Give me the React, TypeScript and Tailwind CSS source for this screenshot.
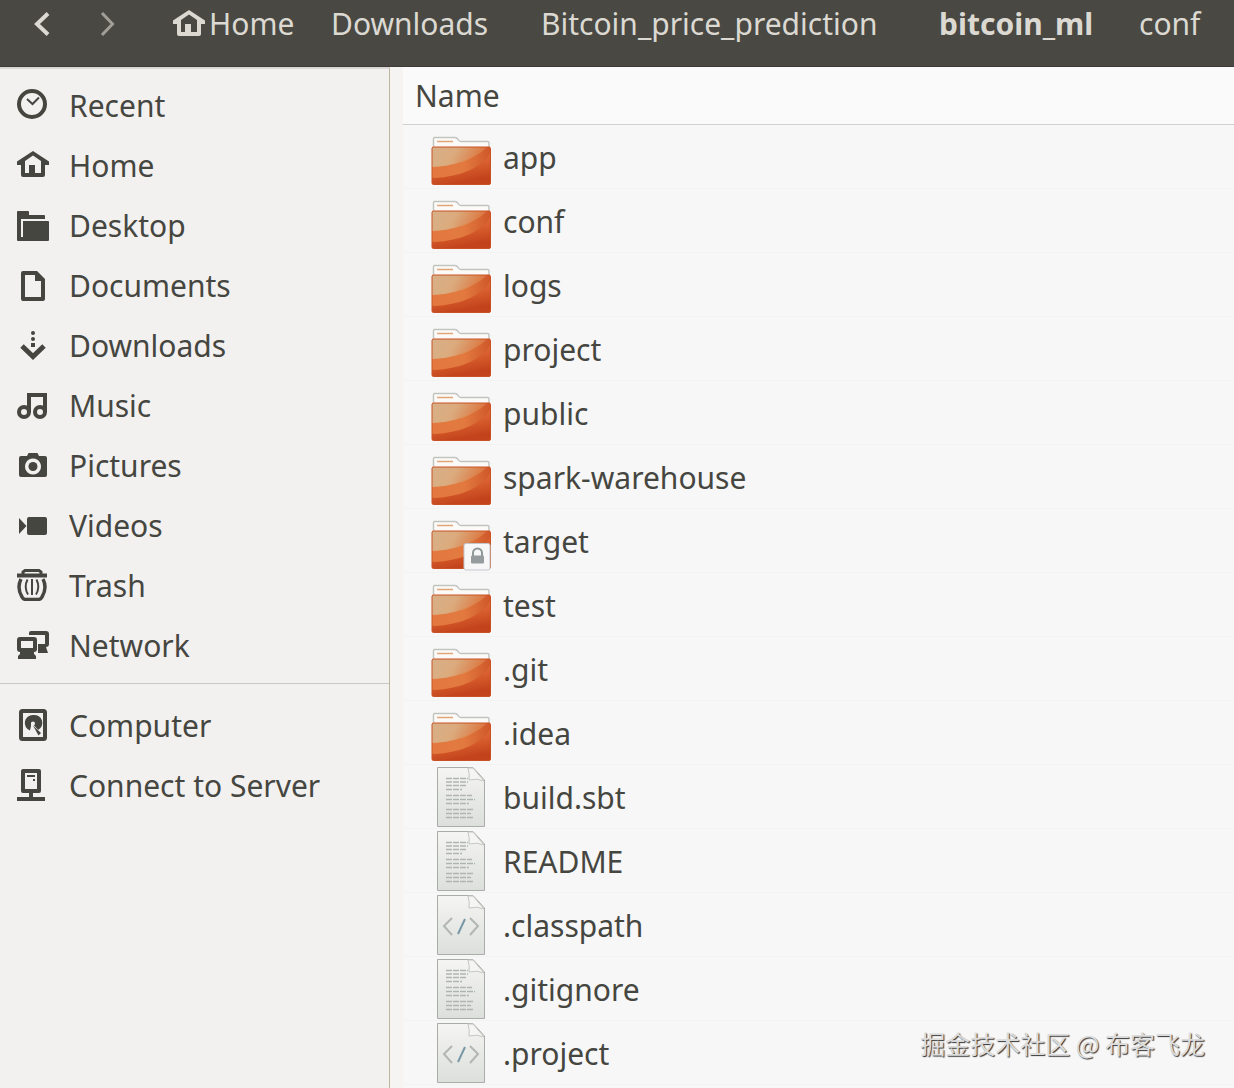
import { ReactNode } from "react";
import { clsx } from "clsx";

type IconName =
  | "recent"
  | "home"
  | "desktop"
  | "documents"
  | "downloads"
  | "music"
  | "pictures"
  | "videos"
  | "trash"
  | "network"
  | "computer"
  | "server";

type EntryKind = "folder" | "locked" | "text" | "code";

interface Place {
  name: string;
  icon: IconName;
}

interface Entry {
  name: string;
  kind: EntryKind;
}

const places: Place[] = [
  { name: "Recent", icon: "recent" },
  { name: "Home", icon: "home" },
  { name: "Desktop", icon: "desktop" },
  { name: "Documents", icon: "documents" },
  { name: "Downloads", icon: "downloads" },
  { name: "Music", icon: "music" },
  { name: "Pictures", icon: "pictures" },
  { name: "Videos", icon: "videos" },
  { name: "Trash", icon: "trash" },
  { name: "Network", icon: "network" },
];

const devices: Place[] = [
  { name: "Computer", icon: "computer" },
  { name: "Connect to Server", icon: "server" },
];

const entries: Entry[] = [
  { name: "app", kind: "folder" },
  { name: "conf", kind: "folder" },
  { name: "logs", kind: "folder" },
  { name: "project", kind: "folder" },
  { name: "public", kind: "folder" },
  { name: "spark-warehouse", kind: "folder" },
  { name: "target", kind: "locked" },
  { name: "test", kind: "folder" },
  { name: ".git", kind: "folder" },
  { name: ".idea", kind: "folder" },
  { name: "build.sbt", kind: "text" },
  { name: "README", kind: "text" },
  { name: ".classpath", kind: "code" },
  { name: ".gitignore", kind: "text" },
  { name: ".project", kind: "code" },
];

const glyphs: Record<IconName, ReactNode> = {
  recent: (
    <g fill="none" stroke="currentColor">
      <circle cx="15" cy="15" r="13" strokeWidth="4" />
      <path d="M10 10l5.5 5L22 8.500" strokeWidth="2" />
    </g>
  ),
  home: (
    <path
      fillRule="evenodd"
      fill="currentColor"
      d="M16 2L0 12.500V16h4v10a2 2 0 0 0 2 2h20a2 2 0 0 0 2-2V16h4v-3.500zM16 6.500l8 5.500v12h-6v-8h-6v8H8V12z"
    />
  ),
  desktop: (
    <path
      fill="currentColor"
      d="M0 3a1 1 0 0 1 1-1h10a1 1 0 0 1 1 1v3h15a1 1 0 0 1 1 1v3H4v18h2V12h25a1 1 0 0 1 1 1v18a1 1 0 0 1-1 1H1a1 1 0 0 1-1-1z"
    />
  ),
  documents: (
    <path
      fillRule="evenodd"
      fill="currentColor"
      d="M6 2h14l8 8v20a2 2 0 0 1-2 2H6a2 2 0 0 1-2-2V4a2 2 0 0 1 2-2zM8 6v22h16V12h-6V6z"
    />
  ),
  downloads: (
    <>
      <path d="M5 17l11 10.500L27 17" fill="none" stroke="currentColor" strokeWidth="5" />
      <circle cx="16" cy="4" r="2" fill="currentColor" />
      <circle cx="16" cy="10" r="2" fill="currentColor" />
      <path d="M14 14h4v4h-4z" fill="currentColor" />
    </>
  ),
  music: (
    <g fill="none" stroke="currentColor" strokeWidth="4">
      <circle cx="7" cy="23" r="5" />
      <circle cx="23" cy="23" r="5" />
      <path d="M12 23V6h16v17" />
    </g>
  ),
  pictures: (
    <>
      <path
        fillRule="evenodd"
        fill="currentColor"
        d="M10 7l1-2a1 1 0 0 1 1-1h8a1 1 0 0 1 1 1l1 2h6a2 2 0 0 1 2 2v17a2 2 0 0 1-2 2H4a2 2 0 0 1-2-2V9a2 2 0 0 1 2-2zM16 9.500a8 8 0 1 0 .01 0z"
      />
      <circle cx="16" cy="17.500" r="4.500" fill="currentColor" />
    </>
  ),
  videos: (
    <path
      fill="currentColor"
      d="M12 8h16a2 2 0 0 1 2 2v14a2 2 0 0 1-2 2H12a2 2 0 0 1-2-2V10a2 2 0 0 1 2-2zM2 9l7.500 8L2 25z"
    />
  ),
  trash: (
    <g fill="none" stroke="currentColor">
      <path d="M6 5V3l2-1.500h14L24 3v2" strokeWidth="3" />
      <path d="M0 6.500h30" strokeWidth="4" />
      <path d="M4 10c-3 6-2 13 1 18 1 2 2 2.500 4 2.500h12c2 0 3-.5 4-2.500 3-5 4-12 1-18" strokeWidth="3.500" />
      <path d="M10.500 10.500c-2.500 5-2.500 10 .5 15M19.500 10.500c2.500 5 2.500 10-.5 15M15 10v16" strokeWidth="2" />
    </g>
  ),
  network: (
    <>
      <path
        d="M12 6V4a2 2 0 0 1 2-2h15a3 3 0 0 1 3 3v10a3 3 0 0 1-3 3l2 6H21v-9h7V6z"
        fill="currentColor"
      />
      <path
        fillRule="evenodd"
        fill="currentColor"
        d="M3 8h14a3 3 0 0 1 3 3v9a3 3 0 0 1-3 3v2l2 2v3H1v-3l2-2v-2a3 3 0 0 1-3-3v-9a3 3 0 0 1 3-3zM4 12v7h12v-7z"
      />
    </>
  ),
  computer: (
    <>
      <rect x="4" y="2" width="24" height="28" rx="1.500" fill="none" stroke="currentColor" strokeWidth="4" />
      <path d="M16 6a8 8 0 0 0-3 15.500L14 17h3l4 4A8 8 0 0 0 16 6z" fill="currentColor" />
      <path d="M14 13l8 9-2 2-6-3z" fill="#f2f1f0" />
      <circle cx="16" cy="14.500" r="2" fill="#f2f1f0" />
      <path d="M16 16.500l8 7.500-2.500 2.500z" fill="currentColor" />
    </>
  ),
  server: (
    <>
      <path
        fillRule="evenodd"
        fill="currentColor"
        d="M6 0h16a2 2 0 0 1 2 2v20a2 2 0 0 1-2 2h-6v4h12v4H0v-4h12v-4H6a2 2 0 0 1-2-2V2a2 2 0 0 1 2-2zM8 4v16h12V4z"
      />
      <path d="M10 6h8v2h-8zM16 10h2v2h-2z" fill="currentColor" />
    </>
  ),
};

function Glyph({ name }: { name: IconName }) {
  return (
    <svg viewBox="0 0 32 32" className="size-8 shrink-0" aria-hidden="true">
      {glyphs[name]}
    </svg>
  );
}

function Chevron({ back }: { back?: boolean }) {
  return (
    <svg viewBox="0 0 16 24" className="w-4 h-6" aria-hidden="true">
      <path
        d={back ? "M14 1.500L3 12l11 10.500" : "M2 1l10.500 11L2 23"}
        fill="none"
        stroke="currentColor"
        strokeWidth={back ? 4 : 3}
      />
    </svg>
  );
}

function FolderIcon({ locked }: { locked?: boolean }) {
  return (
    <svg viewBox="0 0 60 60" className="size-15" aria-hidden="true">
      <path
        d="M2.500 25V11.500a1 1 0 0 1 1-1H24q2 0 3 2t3 2h26.500a1.500 1.500 0 0 1 1.500 1.500v9"
        fill="#fbfaf8"
        stroke="#c2c5be"
        strokeWidth="1.500"
      />
      <path d="M6 14.500h16" stroke="#e3a777" strokeWidth="1.500" />
      <rect x="1" y="20" width="58.500" height="37.500" rx="1.500" fill="url(#folder-front)" />
      <path d="M1 20h58v6C52 38 34 50 1 51z" fill="url(#folder-swoosh)" />
      <path d="M1 21.500A1.500 1.500 0 0 1 2.500 20H56C46 30 28 39 1 40z" fill="url(#folder-shine)" />
      <rect x="1" y="20" width="58.500" height="37.500" rx="1.500" fill="none" stroke="#c85225" />
      {locked && (
        <>
          <rect x="33" y="32.500" width="26" height="26.500" rx="2" fill="#f7f7f7" stroke="#c3c7cc" />
          <path d="M42 45v-3a4.500 4.500 0 0 1 9 0v3" fill="none" stroke="#8f9698" strokeWidth="2" />
          <rect x="40" y="44.500" width="13" height="8" rx="1" fill="#969c9e" />
        </>
      )}
    </svg>
  );
}

function FileIcon({ code }: { code?: boolean }) {
  return (
    <svg viewBox="0 0 60 60" className="size-15" aria-hidden="true">
      <path d="M6.500.5H42L53.500 13v46.500h-47z" fill="url(#paper)" stroke="#a9ada8" />
      <path d="M37 1q2 7 1 12 8-2 15 1L42 1z" fill="#f5f5f4" stroke="#c4c7c2" />
      {code ? (
        <g fill="none" strokeWidth="2">
          <path d="M21 23l-8 8 8 9M39 23l8 8-8 9" stroke="#b2b7b3" />
          <path d="M34 24l-7 15" stroke="#7898a6" />
        </g>
      ) : (
        <g stroke="#b0b5b0" strokeWidth="1.500" strokeDasharray="6 1">
          <path d="M15 11.500h22M15 15h22M15 18.500h20M15 22.500h16" />
          <path d="M15 28.500h26M15 32.500h29M15 36.500h23" />
          <path d="M15 42.500h27M15 46.500h25M15 50.500h27" />
        </g>
      )}
    </svg>
  );
}

function EntryIcon({ kind }: { kind: EntryKind }) {
  if (kind === "folder" || kind === "locked") {
    return <FolderIcon locked={kind === "locked"} />;
  }
  return <FileIcon code={kind === "code"} />;
}

// Gradients shared by every folder and file icon
function IconDefs() {
  return (
    <svg className="absolute size-0" aria-hidden="true">
      <defs>
        <linearGradient id="folder-front" x1="0" y1="0" x2="0.3" y2="1">
          <stop offset="0" stopColor="#e07038" />
          <stop offset="0.6" stopColor="#d9602f" />
          <stop offset="1" stopColor="#c3441c" />
        </linearGradient>
        <linearGradient id="folder-swoosh" x1="0" y1="0" x2="1" y2="0">
          <stop offset="0" stopColor="#e4783f" />
          <stop offset="0.55" stopColor="#e27a40" />
          <stop offset="1" stopColor="#d0582a" />
        </linearGradient>
        <linearGradient id="folder-shine" x1="0" y1="0" x2="1" y2="0.2">
          <stop offset="0" stopColor="#d8b088" />
          <stop offset="0.45" stopColor="#dbab7e" />
          <stop offset="0.95" stopColor="#dc7740" />
        </linearGradient>
        <linearGradient id="paper" x1="0" y1="0" x2="0" y2="1">
          <stop offset="0" stopColor="#f5f5f4" />
          <stop offset="1" stopColor="#dcdfdb" />
        </linearGradient>
      </defs>
    </svg>
  );
}

function PlaceList({ items }: { items: Place[] }) {
  return (
    <ul>
      {items.map((place) => (
        <li key={place.name}>
          <a href="#" className="flex h-15 items-center gap-5 pl-[17px]">
            <Glyph name={place.icon} />
            <span className="pt-0.5">{place.name}</span>
          </a>
        </li>
      ))}
    </ul>
  );
}

function PathBar() {
  const crumb = "shrink-0 text-left";

  return (
    <header className="flex h-[67px] items-start overflow-hidden border-b border-[#3c3b37] bg-[#494843] pt-1 text-[#dbd9d2]">
      <div className="flex h-10 w-[173px] shrink-0 items-center gap-[50px] pl-[34px]">
        <button type="button" aria-label="Back">
          <Chevron back />
        </button>
        <button type="button" aria-label="Forward" className="text-[#a09e97]">
          <Chevron />
        </button>
      </div>
      <nav aria-label="Path" className="flex h-10 items-center">
        <button type="button" className={clsx(crumb, "flex w-[158px] items-center gap-1")}>
          <Glyph name="home" />
          Home
        </button>
        <button type="button" className={clsx(crumb, "w-[210px]")}>
          Downloads
        </button>
        <button type="button" className={clsx(crumb, "w-[398px]")}>
          Bitcoin_price_prediction
        </button>
        <button type="button" className={clsx(crumb, "w-[200px] font-bold")}>
          bitcoin_ml
        </button>
        <button type="button" className={crumb}>
          conf
        </button>
      </nav>
    </header>
  );
}

export default function App() {
  return (
    <div className="relative flex min-h-screen flex-col bg-[#f5f4f2] font-['Noto_Sans',sans-serif] text-[30px] leading-10 text-[#464641]">
      <IconDefs />
      <PathBar />
      <div className="flex grow">
        <aside className="w-[390px] shrink-0 border-t-2 border-r border-t-[#dad8d4] border-r-[#bdb49c] bg-[#f2f1f0] pt-1.5">
          <PlaceList items={places} />
          <hr className="mt-2 mb-[11px] border-[#c9c8c4]" />
          <PlaceList items={devices} />
        </aside>
        <main className="ml-[13px] grow bg-[#f7f7f7]">
          <table className="w-full border-separate border-spacing-0">
            <thead>
              <tr>
                <th className="h-[58px] border-b border-[#cfcfcd] bg-[#fafafa] pl-3 text-left font-normal">
                  Name
                </th>
              </tr>
            </thead>
            <tbody>
              {entries.map((entry) => (
                <tr key={entry.name}>
                  <td className="h-16 border-b border-[#f3f3f3] p-0 pl-7">
                    <div className="flex items-center gap-3">
                      <EntryIcon kind={entry.kind} />
                      <span className="pt-0.5">{entry.name}</span>
                    </div>
                  </td>
                </tr>
              ))}
            </tbody>
          </table>
        </main>
      </div>
      <p className="absolute right-[29px] bottom-[27px] font-['Noto_Sans_CJK_SC',sans-serif] text-[25px] leading-9 text-[#dcdcdc] [text-shadow:1px_1px_1px_#333]">
        掘金技术社区 @ 布客飞龙
      </p>
    </div>
  );
}
